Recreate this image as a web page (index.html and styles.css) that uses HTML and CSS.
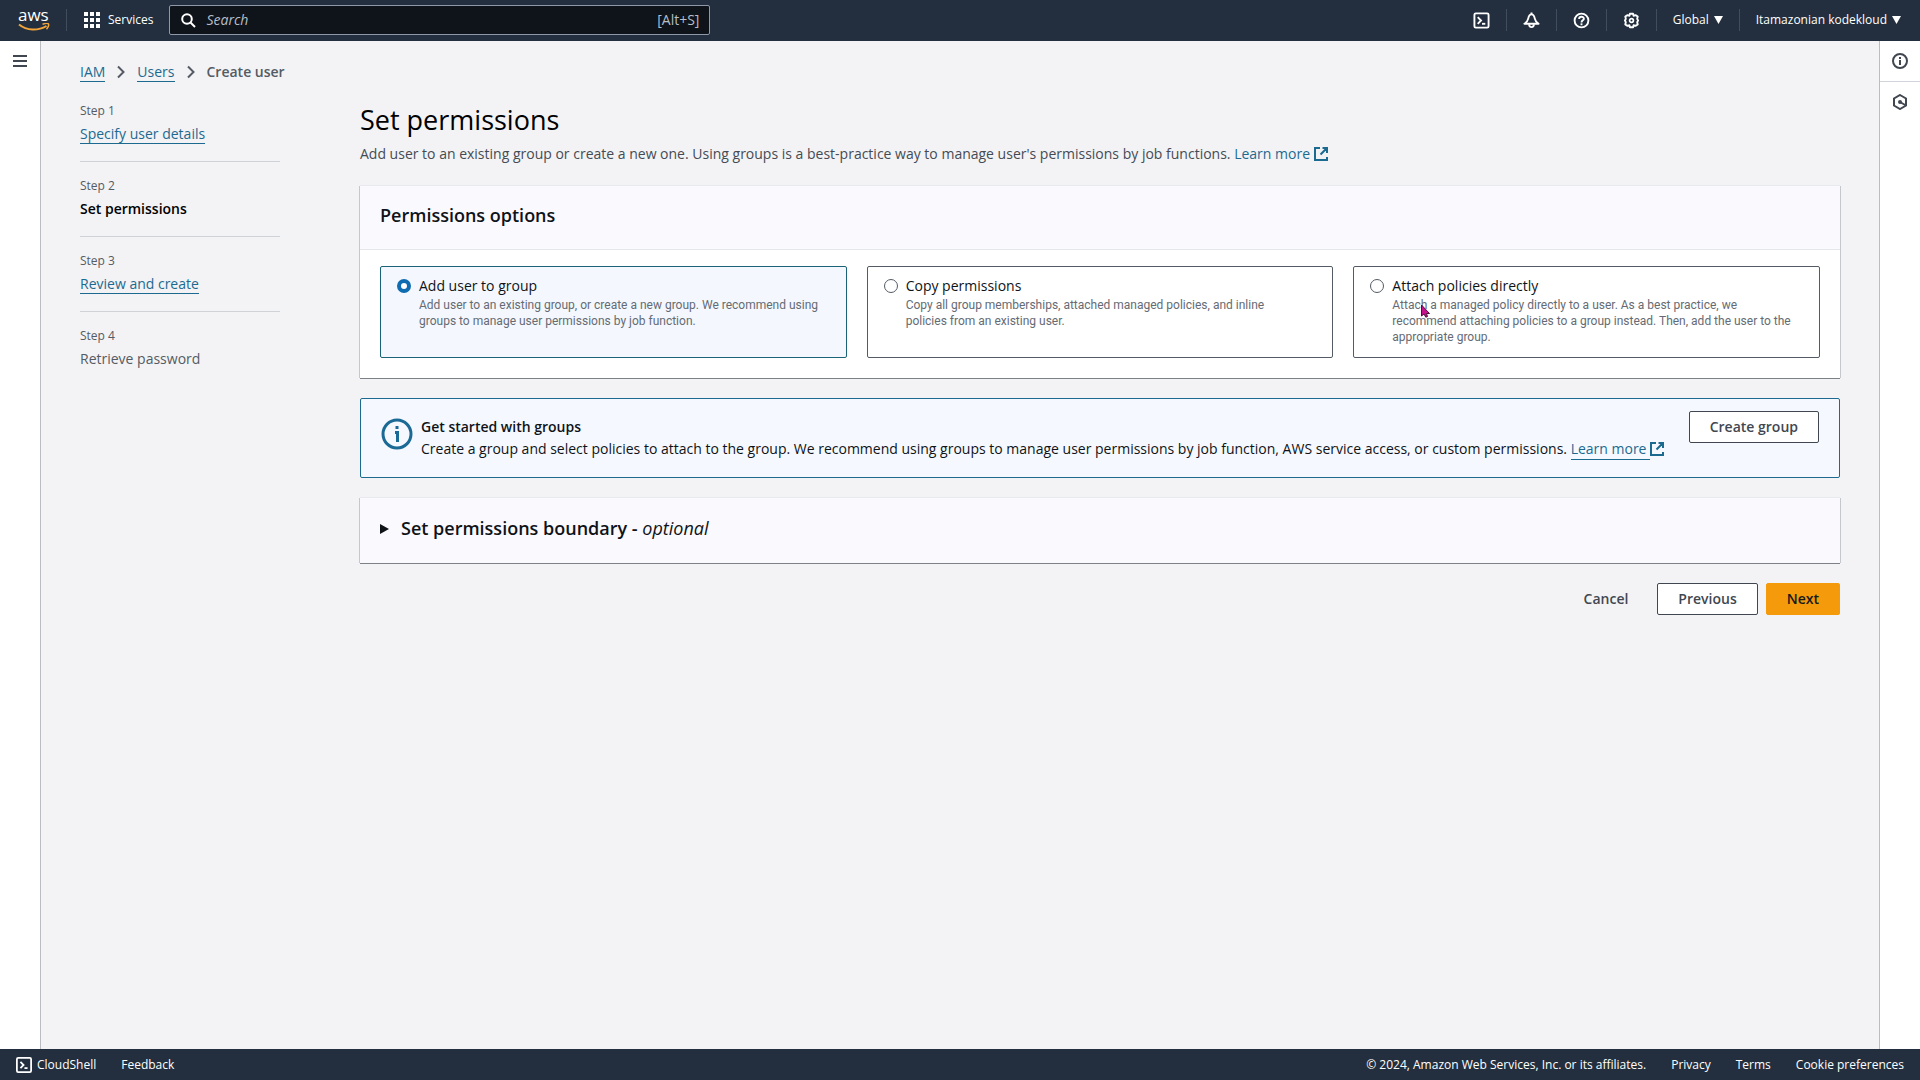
FILE: index.html
```html
<!DOCTYPE html>
<html lang="en">
<head>
<meta charset="UTF-8" />
<meta name="viewport" content="width=device-width, initial-scale=1" />
<title>Create user | IAM | Global</title>
<link rel="stylesheet" href="styles.css">
</head>
<body>
  <header class="topbar">
    <a href="#" class="logo" aria-label="AWS home">
      <span class="logo-text">aws</span>
      <svg class="logo-smile" viewBox="0 0 32 9" fill="none" stroke="#f2a33a">
        <path d="M1 1.500 C9 8 20 8 28.500 3" stroke-width="2" />
        <path d="M24.500 1.300 C27 0.500 30 0.300 30.500 1 C31 2 30 4.500 28.500 6.200" stroke-width="1.500" />
      </svg>
    </a>
    <button class="services">
      <svg width="16" height="16" viewBox="0 0 16 16" fill="currentColor">
        <path d="M0 0h4v4H0zM6 0h4v4H6zM12 0h4v4h-4zM0 6h4v4H0zM6 6h4v4H6zM12 6h4v4h-4zM0 12h4v4H0zM6 12h4v4H6zM12 12h4v4h-4z" />
      </svg>
      Services
    </button>
    <label class="search">
      <svg width="15" height="15" viewBox="0 0 15 15" fill="none" stroke="currentColor" stroke-width="2">
        <circle cx="6" cy="6" r="4.800" />
        <path d="M9.500 9.500 L14 14" />
      </svg>
      <input type="text" placeholder="Search" aria-label="Search" />
      <span class="shortcut">[Alt+S]</span>
    </label>
    <nav class="tools">
      <button class="tool" aria-label="CloudShell">
        <svg width="17" height="17" viewBox="0 0 18 18" fill="none" stroke="currentColor" stroke-width="2">
          <rect x="1.500" y="1.500" width="15" height="15" rx="1.500" />
          <path d="M5 5.500 L8.500 9 L5 12.500" />
          <path d="M9.500 12.500 H13" />
        </svg>
      </button>
      <button class="tool" aria-label="Notifications">
        <svg width="17" height="17" viewBox="0 0 18 18" fill="none" stroke="currentColor" stroke-width="2" stroke-linejoin="round">
          <path d="M9 2.500 C6.500 2.500 6 4.500 5.500 7 C5 9.500 4 11 1.500 12.500 H16.500 C14 11 13 9.500 12.500 7 C12 4.500 11.500 2.500 9 2.500 Z" />
          <path d="M9 0.500 V3" />
          <path d="M6.500 13 C6.500 17 11.500 17 11.500 13" />
        </svg>
      </button>
      <button class="tool" aria-label="Help">
        <svg width="17" height="17" viewBox="0 0 18 18" fill="none" stroke="currentColor" stroke-width="2">
          <circle cx="9" cy="9" r="7.300" />
          <path d="M6.500 7.500 C6.500 4.300 11.500 4.300 11.500 7.200 C11.500 8.800 9 8.800 9 11" />
          <path d="M9 12 V14" />
        </svg>
      </button>
      <button class="tool" aria-label="Settings">
        <svg width="17" height="17" viewBox="0 0 18 18" fill="none" stroke="currentColor" stroke-width="2" stroke-linejoin="round">
          <path d="M7.300 1.800 H10.700 L11.200 4 L13.200 3.300 L15.600 4.800 L15 7.300 L16 9 L15 10.700 L15.600 13.200 L13.200 14.700 L11.200 14 L10.700 16.200 H7.300 L6.800 14 L4.800 14.700 L2.400 13.200 L3 10.700 L2 9 L3 7.300 L2.400 4.800 L4.800 3.300 L6.800 4 Z" />
          <circle cx="9" cy="9" r="2" stroke-width="1.800" />
        </svg>
      </button>
      <button class="tool tool-text">Global <svg class="caret" viewBox="0 0 9 8"><path d="M0 0H9L4.500 8Z" /></svg></button>
      <button class="tool tool-text">Itamazonian kodekloud <svg class="caret" viewBox="0 0 9 8"><path d="M0 0H9L4.500 8Z" /></svg></button>
    </nav>
  </header>

  <div class="layout">
    <aside class="rail rail-left">
      <button class="rail-button" aria-label="Open navigation">
        <svg width="14" height="12" viewBox="0 0 14 12" fill="currentColor">
          <path d="M0 0h14v2H0zM0 5h14v2H0zM0 10h14v2H0z" />
        </svg>
      </button>
    </aside>

    <main class="content">
      <nav class="breadcrumb" aria-label="Breadcrumb">
        <a href="#" class="link">IAM</a>
        <svg width="8" height="14" viewBox="0 0 8 14" fill="none" stroke="currentColor" stroke-width="2"><path d="M1 1.500 L6.500 7 L1 12.500" /></svg>
        <a href="#" class="link">Users</a>
        <svg width="8" height="14" viewBox="0 0 8 14" fill="none" stroke="currentColor" stroke-width="2"><path d="M1 1.500 L6.500 7 L1 12.500" /></svg>
        <span class="current">Create user</span>
      </nav>

      <div class="wizard">
        <ol class="steps">
          <li class="step">
            <span class="step-number">Step 1</span>
            <a href="#" class="step-name link">Specify user details</a>
          </li>
          <li class="step">
            <span class="step-number">Step 2</span>
            <span class="step-name active">Set permissions</span>
          </li>
          <li class="step">
            <span class="step-number">Step 3</span>
            <a href="#" class="step-name link">Review and create</a>
          </li>
          <li class="step">
            <span class="step-number">Step 4</span>
            <span class="step-name">Retrieve password</span>
          </li>
        </ol>

        <form class="form">
          <h1 class="title">Set permissions</h1>
          <p class="description">Add user to an existing group or create a new one. Using groups is a best-practice way to manage user's permissions by job functions.
            <a href="#" class="learn-more">Learn more <svg class="external" viewBox="0 0 14 14"><path d="M6 1H1V13H13V10M8.500 1H13V6M13 1L6.500 7.500" /></svg></a>
          </p>

          <section class="card">
            <h2 class="card-header">Permissions options</h2>
            <div class="tiles">
              <label class="tile selected">
                <input type="radio" name="permissions" checked />
                <span class="tile-text">
                  <span class="tile-title">Add user to group</span>
                  <span class="tile-description">Add user to an existing group, or create a new group. We recommend using groups to manage user permissions by job function.</span>
                </span>
              </label>
              <label class="tile">
                <input type="radio" name="permissions" />
                <span class="tile-text">
                  <span class="tile-title">Copy permissions</span>
                  <span class="tile-description">Copy all group memberships, attached managed policies, and inline<br>policies from an existing user.</span>
                </span>
              </label>
              <label class="tile">
                <input type="radio" name="permissions" />
                <span class="tile-text">
                  <span class="tile-title">Attach policies directly</span>
                  <span class="tile-description">Attach a managed policy directly to a user. As a best practice, we<br>recommend attaching policies to a group instead. Then, add the user to the<br>appropriate group.</span>
                </span>
                <svg class="pointer" viewBox="0 0 9 14"><path d="M0.500 1V12L3 10L4.800 13.200L6.500 12.500L5.500 9.500H8.500Z" /></svg>
              </label>
            </div>
          </section>

          <section class="alert">
            <svg class="alert-icon" viewBox="0 0 32 32" fill="none" stroke="currentColor" stroke-width="3">
              <circle cx="16" cy="16" r="14" />
              <path d="M16 8V11M14 14.500H16.500V24" />
            </svg>
            <div class="alert-text">
              <strong>Get started with groups</strong>
              <p>Create a group and select policies to attach to the group. We recommend using groups to manage user permissions by job function, AWS service access, or custom permissions.
                <a href="#" class="learn-more"><span class="link">Learn more </span><svg class="external" viewBox="0 0 14 14"><path d="M6 1H1V13H13V10M8.500 1H13V6M13 1L6.500 7.500" /></svg></a>
              </p>
            </div>
            <button type="button" class="button">Create group</button>
          </section>

          <details class="card">
            <summary class="boundary">
              <svg width="9" height="10" viewBox="0 0 9 10" fill="currentColor"><path d="M0 0L9 5L0 10Z" /></svg>
              <h2>Set permissions boundary - <em>optional</em></h2>
            </summary>
          </details>

          <div class="actions">
            <button type="button" class="button button-plain">Cancel</button>
            <button type="button" class="button">Previous</button>
            <button type="button" class="button button-primary">Next</button>
          </div>
        </form>
      </div>
    </main>

    <aside class="rail rail-right">
      <button class="rail-button" aria-label="Info">
        <svg width="16" height="16" viewBox="0 0 16 16" fill="none" stroke="currentColor" stroke-width="2">
          <circle cx="8" cy="8" r="7" />
          <path d="M8 4V6M8 7V12" />
        </svg>
      </button>
      <button class="rail-button" aria-label="Diagnostics">
        <svg width="16" height="16" viewBox="0 0 16 16" fill="none" stroke="currentColor" stroke-width="2">
          <path d="M8 1L14 4.500V11.500L8 15L2 11.500V4.500Z" />
          <circle cx="8" cy="8" r="1" fill="currentColor" />
          <path d="M8 8L14 11.500" />
        </svg>
      </button>
    </aside>
  </div>

  <footer class="footer">
    <button class="footer-shell">
      <svg width="16" height="16" viewBox="0 0 18 18" fill="none" stroke="currentColor" stroke-width="2">
        <rect x="1" y="1" width="16" height="16" rx="1.500" />
        <path d="M5 5.500 L8.500 9 L5 12.500" />
        <path d="M9.500 12.500 H13" />
      </svg>
      CloudShell
    </button>
    <a href="#">Feedback</a>
    <span class="copyright">© 2024, Amazon Web Services, Inc. or its affiliates.</span>
    <a href="#">Privacy</a>
    <a href="#">Terms</a>
    <a href="#">Cookie preferences</a>
  </footer>
</body>
</html>
```
FILE: styles.css
```css
* {
  box-sizing: border-box;
}
body {
  margin: 0;
  min-height: 100vh;
  display: flex;
  flex-direction: column;
  font-family: 'Open Sans', sans-serif;
  font-size: 14px;
  line-height: 22px;
  color: #0f1318;
  background-color: #f3f3f5;
}
h1, h2, p, ol {
  margin: 0;
  padding: 0;
}
button, input {
  font: inherit;
  color: inherit;
}
button {
  background: none;
  border: none;
  padding: 0;
  cursor: pointer;
}
a {
  color: inherit;
  text-decoration: none;
}
svg {
  flex: none;
}

/* top bar */
.topbar {
  height: 41px;
  padding-bottom: 1px;
  display: flex;
  align-items: center;
  background-color: #232f3e;
  color: #fff;
  font-size: 12px;
  font-weight: 500;
}
.logo {
  width: 67px;
  height: 22px;
  padding-left: 18px;
  display: flex;
  flex-direction: column;
  border-right: 1px solid #414d5c;
}
.logo-text {
  font-size: 17px;
  line-height: 12px;
}
.logo-smile {
  width: 32px;
  height: 9px;
  margin-top: 2px;
}
.services {
  display: flex;
  align-items: center;
  gap: 8px;
  margin: 0 16px 0 17px;
}
.search {
  width: 541px;
  height: 30px;
  padding: 0 10px 0 11px;
  display: flex;
  align-items: center;
  gap: 10px;
  border: 1px solid #8d99a8;
  border-radius: 2px;
  background-color: #0f141a;
  font-size: 14px;
  font-weight: 400;
}
.search input {
  flex: 1;
  min-width: 0;
  padding: 0;
  border: none;
  outline: none;
  background: none;
}
.search input::placeholder {
  color: #b6bec9;
  font-style: italic;
}
.shortcut {
  color: #b6bec9;
}
.tools {
  margin-left: auto;
  display: flex;
}
.tool {
  height: 22px;
  padding: 0 16px;
  display: flex;
  align-items: center;
  gap: 5px;
}
.tool + .tool {
  border-left: 1px solid #414d5c;
}
.tool-text:last-child {
  padding-right: 19px;
}
.caret {
  width: 9px;
  height: 8px;
  fill: currentColor;
}

/* page */
.layout {
  flex: 1;
  display: flex;
}
.rail {
  width: 41px;
  background-color: #fff;
  color: #414750;
}
.rail-left {
  border-right: 1px solid #b9bcc0;
}
.rail-right {
  border-left: 1px solid #b9bcc0;
}
.rail-button {
  width: 100%;
  height: 40px;
  display: flex;
  align-items: center;
  justify-content: center;
}
.rail-button + .rail-button {
  border-top: 1px solid #d1d5db;
}
.content {
  flex: 1;
  min-width: 0;
  padding: 20px 39px;
}
.breadcrumb {
  display: flex;
  align-items: center;
  gap: 12px;
  color: #545b64;
}
.breadcrumb .link {
  line-height: 18px;
}
.link {
  color: #1c6a90;
  border-bottom: 1px solid #1c6a90;
}
.current {
  font-weight: 600;
}
.wizard {
  display: flex;
  gap: 80px;
  padding-top: 17px;
}
.steps {
  width: 200px;
  flex: none;
  list-style: none;
  color: #545b64;
}
.step {
  height: 75px;
  display: flex;
  flex-direction: column;
  align-items: flex-start;
}
.step + .step {
  border-top: 1px solid #cfd3d7;
  padding-top: 13px;
}
.step:first-child {
  height: 61px;
}
.step-number {
  font-size: 12px;
}
.step-name {
  margin-top: 3px;
  line-height: 18px;
}
.active {
  color: #000;
  font-weight: 600;
}

/* form */
.form {
  flex: 1;
  min-width: 0;
  display: flex;
  flex-direction: column;
}
.title {
  font-size: 27px;
  line-height: 36px;
  font-weight: 400;
  color: #000;
  margin-top: 2px;
}
.description {
  margin: 5px 0 21px;
  color: #454b54;
}
.learn-more {
  color: #1c6a90;
  white-space: nowrap;
}
.external {
  width: 14px;
  height: 14px;
  vertical-align: -2px;
  fill: none;
  stroke: currentColor;
  stroke-width: 2;
}
.card {
  background-color: #fff;
  box-shadow: 0 1px 0 #7c8187, 1px 0 0 #c4c7cb, -1px 0 0 #c4c7cb, 0 -1px 0 #e8e9ec;
}
.card-header {
  padding: 16px 20px 20px;
  font-size: 18px;
  line-height: 27px;
  font-weight: 600;
  background-color: #faf9fd;
  border-bottom: 1px solid #e6e7ea;
}
.tiles {
  display: grid;
  grid-template-columns: repeat(3, 1fr);
  gap: 20px;
  padding: 16px 20px 20px;
}
.tile {
  position: relative;
  min-height: 92px;
  padding: 8px 12px 8px 16px;
  display: flex;
  gap: 8px;
  border: 1px solid #545b64;
  border-radius: 2px;
}
.tile.selected {
  border-color: #1b6377;
  background-color: #f4f8fe;
}
.tile input {
  appearance: none;
  flex: none;
  width: 14px;
  height: 14px;
  margin: 4px 0 0;
  border: 1px solid #545b64;
  border-radius: 50%;
  background-color: #fff;
}
.tile input:checked {
  border: 4px solid #0f6cb0;
}
.tile-text {
  display: flex;
  flex-direction: column;
}
/* narrower face so the longest description stays on three lines */
.tile-description {
  font-family: Roboto, 'Open Sans', sans-serif;
  font-size: 12px;
  line-height: 16px;
  color: #656b74;
}
.pointer {
  position: absolute;
  left: 67px;
  top: 37px;
  width: 9px;
  height: 14px;
  fill: #c4108a;
  stroke: #4a1038;
}
.alert {
  margin-top: 20px;
  min-height: 80px;
  padding: 12px 20px;
  display: flex;
  align-items: flex-start;
  border: 1px solid #1c6a90;
  border-radius: 2px;
  background-color: #f5f9ff;
}
.alert-icon {
  width: 32px;
  height: 32px;
  margin: 7px 8px 0 0;
  color: #1b6a95;
}
.alert-text {
  flex: 1;
  padding-top: 5px;
}
.alert-text strong {
  display: block;
  font-weight: 600;
}
.alert .link {
  padding-bottom: 1px;
  white-space: pre;
}
.button {
  height: 32px;
  padding: 0 20px;
  font-weight: 600;
  color: #414750;
  border: 1px solid #414750;
  border-radius: 2px;
  background-color: #fff;
}
details.card {
  margin-top: 20px;
}
.boundary {
  padding: 17px 20px 21px;
  display: flex;
  align-items: center;
  gap: 12px;
  list-style: none;
  background-color: #faf9fd;
  cursor: pointer;
}
.boundary h2 {
  font-size: 18px;
  line-height: 27px;
  font-weight: 600;
}
.boundary em {
  font-weight: 400;
}
.actions {
  margin-top: 20px;
  display: flex;
  justify-content: flex-end;
  gap: 8px;
}
.button-plain {
  background: none;
  border-color: transparent;
}
.button-primary {
  color: #16191f;
  background-color: #f59a0a;
  border-color: #f59a0a;
}

/* footer */
.footer {
  height: 31px;
  padding: 0 16px;
  display: flex;
  align-items: center;
  gap: 25px;
  background-color: #232f3e;
  color: #fff;
  font-size: 12px;
}
.footer-shell {
  display: flex;
  align-items: center;
  gap: 5px;
}
.copyright {
  margin-left: auto;
}
```
